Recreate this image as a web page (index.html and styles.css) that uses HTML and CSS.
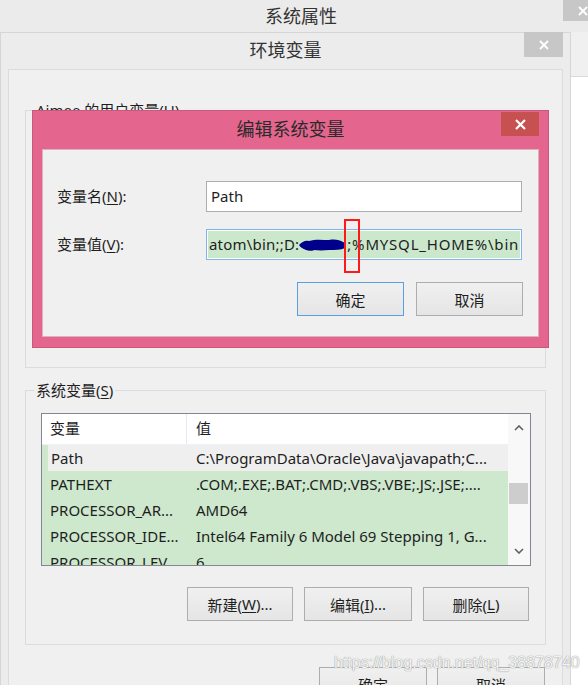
FILE: index.html
```html
<!DOCTYPE html>
<html lang="zh-CN">
<head>
    <meta charset="UTF-8">
    <meta name="viewport" content="width=device-width, initial-scale=1.0">
    <title>编辑系统变量</title>
    <link rel="stylesheet" href="styles.css">
</head>
<body>
    <!-- 系统属性 (window behind) -->
    <div class="sys">
        <div class="sys-title">系统属性</div>
        <div class="sys-close">
            <svg width="10" height="10" viewBox="0 0 10 10"><path d="M1 1L9 9M9 1L1 9" stroke="#fff" stroke-width="1.8"/></svg>
        </div>
        <div class="sys-body">
            <div class="sys-side"></div>
        </div>
    </div>

    <!-- 环境变量 -->
    <div class="env">
        <div class="env-title">
            环境变量
            <div class="env-close">
                <svg width="10" height="10" viewBox="0 0 10 10"><path d="M1 1L9 9M9 1L1 9" stroke="#fff" stroke-width="1.8"/></svg>
            </div>
        </div>
        <div class="env-panel">
            <fieldset class="group user-group">
                <legend>Aimee 的用户变量(<u>U</u>)</legend>
            </fieldset>

            <fieldset class="group sys-group">
                <legend>系统变量(<u>S</u>)</legend>
                <div class="list">
                    <div class="list-main">
                        <div class="list-head">
                            <div class="col-name">变量</div>
                            <div class="col-value">值</div>
                        </div>
                        <div class="list-row selected">
                            <div class="col-name">Path</div>
                            <div class="col-value">C:\ProgramData\Oracle\Java\javapath;C...</div>
                        </div>
                        <div class="list-row">
                            <div class="col-name">PATHEXT</div>
                            <div class="col-value">.COM;.EXE;.BAT;.CMD;.VBS;.VBE;.JS;.JSE;....</div>
                        </div>
                        <div class="list-row">
                            <div class="col-name">PROCESSOR_AR...</div>
                            <div class="col-value">AMD64</div>
                        </div>
                        <div class="list-row">
                            <div class="col-name">PROCESSOR_IDE...</div>
                            <div class="col-value">Intel64 Family 6 Model 69 Stepping 1, G...</div>
                        </div>
                        <div class="list-row">
                            <div class="col-name">PROCESSOR_LEV...</div>
                            <div class="col-value">6</div>
                        </div>
                    </div>
                    <div class="scrollbar">
                        <div class="sb-arrow">
                            <svg width="10" height="6" viewBox="0 0 10 6"><path d="M1 5L5 1L9 5" fill="none" stroke="#606060" stroke-width="1.6"/></svg>
                        </div>
                        <div class="sb-track">
                            <div class="sb-thumb"></div>
                        </div>
                        <div class="sb-arrow">
                            <svg width="10" height="6" viewBox="0 0 10 6"><path d="M1 1L5 5L9 1" fill="none" stroke="#606060" stroke-width="1.6"/></svg>
                        </div>
                    </div>
                </div>
                <div class="group-buttons">
                    <div class="btn">新建(<u>W</u>)...</div>
                    <div class="btn btn-wide">编辑(<u>I</u>)...</div>
                    <div class="btn">删除(<u>L</u>)</div>
                </div>
            </fieldset>

            <div class="env-buttons">
                <div class="btn btn-wide">确定</div>
                <div class="btn btn-wide">取消</div>
            </div>
        </div>
    </div>

    <!-- 编辑系统变量 -->
    <div class="edit">
        <div class="edit-title">
            编辑系统变量
            <div class="edit-close">
                <svg width="11" height="11" viewBox="0 0 11 11"><path d="M1 1L10 10M10 1L1 10" stroke="#fff" stroke-width="2.2"/></svg>
            </div>
        </div>
        <div class="edit-body">
            <div class="field">
                <label class="field-label">变量名(<u>N</u>):</label>
                <div class="input">Path</div>
            </div>
            <div class="field">
                <label class="field-label">变量值(<u>V</u>):</label>
                <div class="input input-focus">
                    <div class="selection">
                        <span class="sel-text">atom\bin;;D:</span>
                        <svg class="scribble" width="48" height="18" viewBox="0 0 48 18">
                            <path d="M0 9C3 6 6 4 10 5C16 3 24 4 30 4C36 3 41 4 44 6C47 7 48 10 46 12C42 14 36 14 30 14C22 15 14 14 8 14C4 13 1 11 0 9Z" fill="#00008b"/>
                            <path d="M3 10C6 13 10 15 15 13" stroke="#00008b" stroke-width="2" fill="none"/>
                        </svg>
                        <span class="sel-text sel-tail">;%MYSQL_HOME%\bin</span>
                    </div>
                </div>
            </div>
            <div class="edit-buttons">
                <div class="btn btn-default">确定</div>
                <div class="btn">取消</div>
            </div>
        </div>
    </div>

    <div class="mark"></div>
    <div class="watermark">https://blog.csdn.net/qq_38878740</div>
</body>
</html>
```

FILE: styles.css
```css
*{
    margin: 0;
    padding: 0;
    box-sizing: border-box;
}

body{
    width: 588px;
    height: 685px;
    overflow: hidden;
    position: relative;
    background-color: #f0f0f0;
    font-family: "Noto Sans", "Noto Sans CJK SC", sans-serif;
    font-size: 15px;
    color: #1e1e1e;
}

u{
    text-decoration: underline;
    text-underline-offset: 2px;
}

/* windows on the desktop */
.sys{
    position: absolute;
    inset: 0;
}

.sys-title{
    height: 32px;
    line-height: 32px;
    padding-left: 14px;
    text-align: center;
    font-size: 18px;
    color: #333;
    background-color: #ebebeb;
}

.sys-close{
    position: absolute;
    top: 0;
    left: 563px;
    width: 39px;
    height: 21px;
    display: flex;
    align-items: center;
    justify-content: center;
    background-color: #c7c7c7;
}

.sys-body{
    height: 653px;
    padding: 44px 0 0 570px;
}

.sys-side{
    height: 100%;
    background-color: #fff;
    border-top: 1px solid #d9d9d9;
    border-left: 1px solid #d9d9d9;
}

.env{
    position: absolute;
    left: 0;
    top: 32px;
    width: 571px;
    height: 720px;
    border: 1px solid #d6d6d6;
    background-color: #ececec;
}

.env-title{
    position: relative;
    height: 36px;
    line-height: 34px;
    text-align: center;
    font-size: 18px;
    color: #333;
}

.env-close{
    position: absolute;
    top: -1px;
    right: 7px;
    width: 39px;
    height: 25px;
    display: flex;
    align-items: center;
    justify-content: center;
    background-color: #c7c7c7;
}

.env-panel{
    height: 700px;
    margin: 0 7px;
    padding: 0 16px;
    border: 1px solid #dcdcdc;
    background-color: #f0f0f0;
}

.group{
    border: 1px solid #dcdcdc;
    padding: 13px 14px 23px 15px;
}

.group legend{
    margin-left: -7px;
    padding: 0 2px;
    line-height: 20px;
    color: #1e1e1e;
}

.user-group{
    margin-top: 30px;
    height: 268px;
}

.sys-group{
    margin-top: 12px;
}

/* list view */
.list{
    display: flex;
    height: 153px;
    border: 1px solid #828790;
    background-color: #cde8cd;
}

.list-main{
    flex: 1;
    overflow: hidden;
}

.list-head{
    display: flex;
    height: 31px;
    line-height: 29px;
    background-color: #fff;
    border-bottom: 1px solid #eef2f6;
}

.list-head .col-name{
    border-right: 1px solid #e3e9f0;
}

.col-name{
    width: 145px;
    padding-left: 8px;
    white-space: nowrap;
    overflow: hidden;
}

.col-value{
    flex: 1;
    padding-left: 9px;
    white-space: nowrap;
    overflow: hidden;
}

.list-row{
    display: flex;
    height: 26px;
    line-height: 26px;
}

.list-row.selected{
    margin-left: 6px;
    background-color: #efefef;
}

.list-row.selected .col-name{
    width: 139px;
    padding-left: 3px;
}

.scrollbar{
    width: 22px;
    display: flex;
    flex-direction: column;
    background-color: #f8f8f8;
}

.sb-arrow{
    height: 28px;
    display: flex;
    align-items: center;
    justify-content: center;
}

.sb-track{
    flex: 1;
    padding: 41px 2px 0 1px;
}

.sb-thumb{
    height: 21px;
    background-color: #cdcdcd;
}

/* buttons */
.group-buttons{
    display: flex;
    justify-content: flex-end;
    gap: 11px;
    margin-top: 21px;
    padding-right: 2px;
}

.btn{
    width: 106px;
    height: 34px;
    display: flex;
    align-items: center;
    justify-content: center;
    border: 1px solid #adadad;
    background: linear-gradient(#f0f0f0, #e5e5e5);
    color: #1e1e1e;
}

.btn-wide{
    width: 108px;
}

.env-buttons{
    display: flex;
    justify-content: flex-end;
    gap: 10px;
    margin-top: 22px;
    padding-right: 1px;
}

/* edit dialog */
.edit{
    position: absolute;
    left: 32px;
    top: 110px;
    width: 517px;
    height: 238px;
    border: 1px solid #c9587f;
    background-color: #e4658e;
}

.edit-title{
    position: relative;
    height: 38px;
    line-height: 36px;
    text-align: center;
    font-size: 18px;
    color: #2a2a2a;
}

.edit-close{
    position: absolute;
    top: 1px;
    right: 9px;
    width: 38px;
    height: 24px;
    display: flex;
    align-items: center;
    justify-content: center;
    background-color: #c75050;
}

.edit-body{
    height: 188px;
    margin: 0 9px;
    padding: 31px 15px 0 14px;
    border: 1px solid #d9b3c2;
    background-color: #f0f0f0;
}

.field{
    display: flex;
    align-items: center;
    margin-bottom: 17px;
}

.field-label{
    width: 149px;
    margin-top: -2px;
}

.input{
    width: 316px;
    height: 31px;
    padding-left: 4px;
    line-height: 29px;
    border: 1px solid #abadb3;
    background-color: #fff;
}

.input-focus{
    padding: 1px;
    border-color: #7eb4ea;
}

.selection{
    display: flex;
    align-items: center;
    height: 27px;
    padding-left: 1px;
    white-space: nowrap;
    overflow: hidden;
    background-color: #cce8cc;
}

.sel-text{
    letter-spacing: 0.2px;
}

.sel-tail{
    letter-spacing: 0.8px;
}

.scribble{
    flex: none;
    margin-top: 1px;
}

.edit-buttons{
    display: flex;
    justify-content: flex-end;
    gap: 12px;
    margin-top: 22px;
}

.edit-buttons .btn{
    width: 107px;
}

.btn-default{
    border-color: #5a9ee3;
}

/* annotation overlays */
.mark{
    position: absolute;
    left: 344px;
    top: 219px;
    width: 16px;
    height: 54px;
    border: 2px solid #ff1a1a;
}

.watermark{
    position: absolute;
    left: 334px;
    top: 654px;
    font-family: "Liberation Sans", Arial, sans-serif;
    font-size: 16px;
    color: rgba(255, 255, 255, 0.9);
    text-shadow: 0 0 1px #9a9a9a, 0 0 1px #9a9a9a;
}
```
